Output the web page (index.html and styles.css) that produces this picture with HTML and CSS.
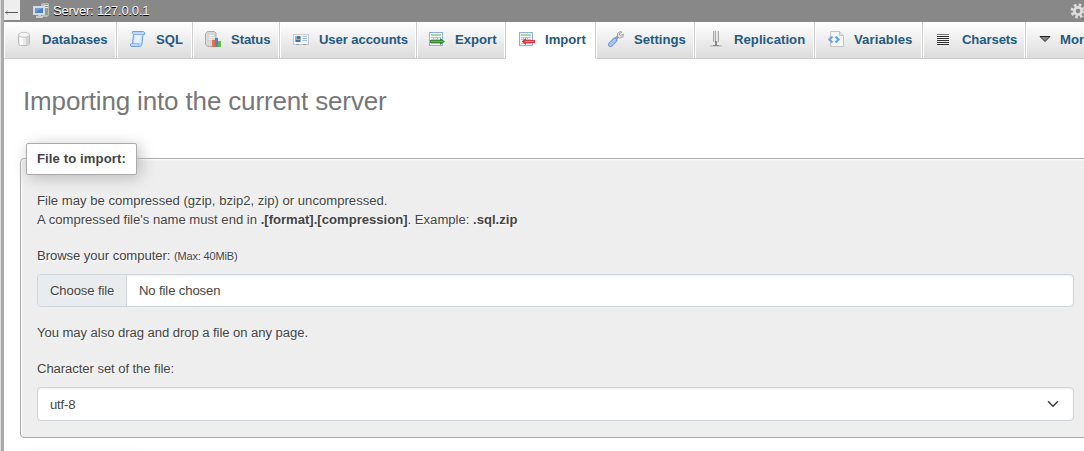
FILE: index.html
```html
<!DOCTYPE html>
<html lang="en">
<head>
<meta charset="utf-8">
<title>Import</title>
<link rel="stylesheet" href="styles.css">
</head>
<body>
<div class="app">
  <div class="resizer"></div>
  <div class="content">
    <header class="serverbar">
      <span class="collapse"><svg width="16" height="20"><path d="M1 12.500H14" stroke="#555"/><path d="M4 10.500L1.500 12.500L4 14.500" fill="none" stroke="#777" stroke-width=".7"/></svg></span>
      <svg class="host" width="16" height="16" viewBox="0 0 16 16"><path d="M8 1l2-1h5l1 1v11l-2 2H9z" fill="#bbb"/><path d="M12 1h3v11h-3z" fill="#999"/><path d="M11 2.500h4M11 4.500h4" stroke="#e5e5e5"/><path d="M13 8h1v3h-1z" fill="#62c431"/><rect x=".5" y="3.500" width="11" height="8" fill="#d5dde8" stroke="#d4dae2"/><path d="M2 5h8v5H2z" fill="#4a80c8"/><path d="M2 5h8L2 9z" fill="#6b9edb"/><path d="M5 12h3v1h2v2H3v-2h2z" fill="#ccc"/></svg>
      <span class="server">Server: 127.0.0.1</span>
      <svg class="gear" width="16" height="16" viewBox="0 0 16 16"><circle cx="8" cy="8" r="6" fill="none" stroke="#ddd" stroke-width="3" stroke-dasharray="2.5 2.21"/><circle cx="8" cy="8" r="3.7" fill="none" stroke="#ddd" stroke-width="2.8"/></svg>
    </header>
    <nav class="tabs">
      <a class="tab t-db"><svg viewBox="0 0 16 16"><path d="M2.500 4v8.500c0 3 11 3 11 0V4" fill="#e8e8e8" stroke="#bbb"/><path d="M4 6h3v8H4z" fill="#fafafa"/><path d="M10 6h3v7l-3 1z" fill="#d2d2d2"/><ellipse cx="8" cy="3.800" rx="5.500" ry="2.500" fill="#f5f5f5" stroke="#c5c5c5"/></svg><span>Databases</span></a>
      <a class="tab t-sql"><svg viewBox="0 0 16 16"><path d="M2.500 .500h11q2 1 1 3h-1.500l-1 9q0 2.500-2 3H1q-1.500-1.500 0-3h1.500l1-9q-2-1-1-3z" fill="#bcd9f7" stroke="#72a2da"/><path d="M5 4h6.500l-1 8H4z" fill="#e4f1ff"/><path d="M4 3.500h8M1 12.500h7.500q0 2 1 3" fill="none" stroke="#8db7e6"/></svg><span>SQL</span></a>
      <a class="tab t-status"><svg viewBox="0 0 16 16"><path d="M.500 2.500l2-2h7l1.500 1.500v12L9.500 15.500h-7L.500 13.500z" fill="#d8d8d8" stroke="#aaa"/><path d="M4 4.500h5M4 6.500h5M4 8.500h3" stroke="#f2f2f2"/><path d="M7 9h3v7H7z" fill="#f26b45"/><path d="M10 7h3v9h-3z" fill="#3e87e8"/><path d="M13 10h3v6h-3z" fill="#64bd32"/></svg><span>Status</span></a>
      <a class="tab t-users"><svg viewBox="0 0 16 16"><rect x=".5" y="3.500" width="15" height="10" fill="#f4f7fa" stroke="#c5cad0"/><path d="M2 5h6v6H2z" fill="#84b4e9"/><path d="M4 5h3v3H4z" fill="#98613c"/><path d="M3 9h4v2H3z" fill="#3175bb"/><path d="M9.500 5.500H14M9.500 7.500H14M9.500 9.500H14" stroke="#9bbce0"/><path d="M3 13.500h3M10 13.500h3" stroke="#999"/></svg><span>User accounts</span></a>
      <a class="tab t-export"><svg viewBox="0 0 16 16"><use href="#sheet"/><path d="M1 9h10V7l5 3.500-5 3.500v-2H1z" fill="#358b30"/><path d="M2 10.500h12" stroke="#65b35a"/></svg><span>Export</span></a>
      <a class="tab t-import active"><svg viewBox="0 0 16 16"><g id="sheet"><rect x=".5" y="1.500" width="13" height="13" fill="#f2f7ff" stroke="#8eb0e0"/><path d="M2 4h10" stroke="#90ce80" stroke-width="1.500"/><path d="M2 6.500h10M2 8.500h10M2 12.500h10M4.500 6v7M8.500 6v7" stroke="#a9c4e8"/></g><path d="M16 9H7V7L2.500 10.500L7 14v-2h9z" fill="#ef303b"/><path d="M6 10.500h9" stroke="#ff9298"/></svg><span>Import</span></a>
      <a class="tab t-settings"><svg viewBox="0 0 16 16"><path d="M7 8.500l4-4" stroke="#999" stroke-width="3"/><path d="M12 .500l-2.500 2v3.500l2 1 3.500-1 .500-3-3 1.500-1.500-1.500L14 1z" fill="#ddd" stroke="#999" stroke-width=".8"/><path d="M2.500 13.500L7 9" stroke="#6f9bdc" stroke-width="5" stroke-linecap="round"/><path d="M2.500 13.500L7 9" stroke="#a5c6f6" stroke-width="3" stroke-linecap="round"/></svg><span>Settings</span></a>
      <a class="tab t-repl"><svg viewBox="0 0 16 16"><path d="M5 0h1v11H5zM7 0h1v12H7zM10 0h1v11h-1z" fill="#aaa"/><path d="M6 0h1v11H6zM9 0h1v12H9z" fill="#ddd"/><path d="M8 10v4" stroke="#888" stroke-width="2"/><path d="M2 15h12" stroke="#ccc" stroke-width="2"/><path d="M5 14.500h6" stroke="#888"/></svg><span>Replication</span></a>
      <a class="tab t-vars"><svg viewBox="0 0 16 16"><path d="M2.500.5h9l4 4v11h-13z" fill="#f7f7f7" stroke="#c5c5c5"/><path d="M11.500.5v4h4" fill="#ddd" stroke="#c5c5c5"/><path d="M4.500 5.500L1.500 8.500l3 3M7.500 5.500l3 3-3 3" fill="none" stroke="#62a8ec" stroke-width="2.300"/></svg><span>Variables</span></a>
      <a class="tab t-char"><svg viewBox="0 0 16 16"><path d="M1 3.500h12" stroke="#777"/><path d="M1 5.500h12M1 7.500h12M1 9.500h12M1 11.500h12M1 13.500h12" stroke="#333"/></svg><span>Charsets</span></a>
      <a class="tab t-more"><svg viewBox="0 0 16 16"><path d="M3 5.500h10L8 10.500z" fill="#888" stroke="#222"/></svg><span>More</span></a>
    </nav>
    <main class="page">
      <h1><span>Importing into the current server</span></h1>
      <section class="card">
        <h2 class="legend"><span>File to import:</span></h2>
        <p class="format">File may be compressed (gzip, bzip2, zip) or uncompressed.<br><span class="l2">A compressed file's name must end in <b>.[format].[compression]</b>. Example: <b>.sql.zip</b></span></p>
        <p class="browse">Browse your computer: <small>(Max: 40MiB)</small></p>
        <div class="file"><span class="choose">Choose file</span><span class="none">No file chosen</span></div>
        <p class="drag">You may also drag and drop a file on any page.</p>
        <p class="charset">Character set of the file:</p>
        <div class="select"><span>utf-8</span><svg width="12" height="12" viewBox="0 0 16 16"><path d="M2 5l6 6 6-6" fill="none" stroke="#343a40" stroke-width="2" stroke-linecap="round" stroke-linejoin="round"/></svg></div>
      </section>
      <div class="next-legend"></div>
    </main>
  </div>
</div>
</body>
</html>
```
FILE: styles.css
```css
* { box-sizing: border-box; }
body { margin: 0; background: #fff; color: #444; font: 13.12px/19px "Liberation Sans", Arial, sans-serif; overflow: hidden; }
.app { display: flex; width: 1084px; height: 451px; overflow: hidden; }
.resizer { width: 4px; flex: none; border-left: 1px solid #ddd; border-right: 3px solid #aaa; }
.content { width: 1080px; flex: none; overflow: hidden; }
.serverbar { height: 22px; background: #888; display: flex; align-items: flex-start; color: #fff; text-shadow: 0 1px 0 #000; }
.collapse { width: 16px; height: 20px; background: #eee; flex: none; }
.collapse svg, .host, .gear { display: block; flex: none; }
.host { margin: 3px 4px 0 13px; }
.server { line-height: 21px; white-space: nowrap; flex: 1; letter-spacing: -.25px; }
.gear { margin: 3px -2px 0 0; }
.tabs { display: flex; height: 37px; }
.tab { flex: none; display: flex; align-items: center; padding: 0 0 2px 12px; gap: 10px; border-right: 1px solid #ccc; border-bottom: 1px solid #ccc; background: linear-gradient(#fff, #dcdcdc); box-shadow: inset 1px 0 #fff, inset -1px 0 #fff; color: #235a81; font-weight: bold; white-space: nowrap; }
.tab svg { width: 16px; height: 16px; flex: none; }
.tab.active { background: #fff; border-bottom-color: #fff; }
.t-db { width: 113px; } .t-sql { width: 76px; padding-left: 13px; } .t-status { width: 87px; letter-spacing: -.1px; } .t-users { width: 137px; padding-left: 13px; letter-spacing: -.1px; }
.t-export { width: 89px; } .t-import { width: 90px; padding-left: 13px; } .t-settings { width: 99px; } .t-repl { width: 120px; padding-left: 13px; letter-spacing: .05px; }
.t-vars { width: 108px; padding-left: 13px; letter-spacing: .1px; } .t-char { width: 103px; padding-left: 13px; letter-spacing: -.1px; } .t-more { width: 100px; padding-left: 11px; gap: 7px; }
.page { padding: 26px 0 0 16px; }
h1 { margin: 0 0 0 3px; font-size: 26px; font-weight: normal; line-height: 32px; color: #777; white-space: nowrap; letter-spacing: -.15px; }
.card { margin-top: 41px; width: 1080px; height: 280px; padding: 0 25px 0 16px; border: 1px solid #aaa; border-radius: 4px 0 0 4px; background: #eee; box-shadow: inset 1px 1px 2px #fff; text-shadow: 1px 1px 2px #fff; }
.legend { margin: -16px 0 0 -11px; width: 111px; height: 32px; padding-left: 10px; border: 1px solid #aaa; border-radius: 2px; background: #fff; box-shadow: 3px 3px 15px #bbb; font-size: 13.12px; line-height: 30px; white-space: nowrap; letter-spacing: .1px; }
p { margin: 0; white-space: nowrap; }
.format { margin-top: 16px; }
.l2 { letter-spacing: -.01px; }
.browse { margin-top: 17px; letter-spacing: -.07px; }
small { font-size: 11px; letter-spacing: -.15px; }
.file { margin-top: 8px; height: 33px; display: flex; border: 1px solid #ced4da; border-radius: 4px; background: #fff; line-height: 31px; overflow: hidden; box-shadow: inset 0 1px 2px #0001; letter-spacing: -.12px; }
.choose { width: 89px; padding-left: 12px; background: #e9ecef; border-right: 1px solid #ced4da; }
.none { padding-left: 12px; }
.drag { margin-top: 16px; letter-spacing: -.07px; }
.charset { margin-top: 17px; letter-spacing: -.08px; }
.select { margin-top: 9px; height: 34px; display: flex; align-items: center; justify-content: space-between; padding: 0 14px 0 12px; border: 1px solid #ced4da; border-radius: 4px; background: #fff; box-shadow: inset 0 1px 2px #0001; letter-spacing: -.2px; }
.next-legend { margin: 21px 0 0 6px; width: 111px; height: 33px; box-shadow: 3px 3px 15px #bbb; }
```
